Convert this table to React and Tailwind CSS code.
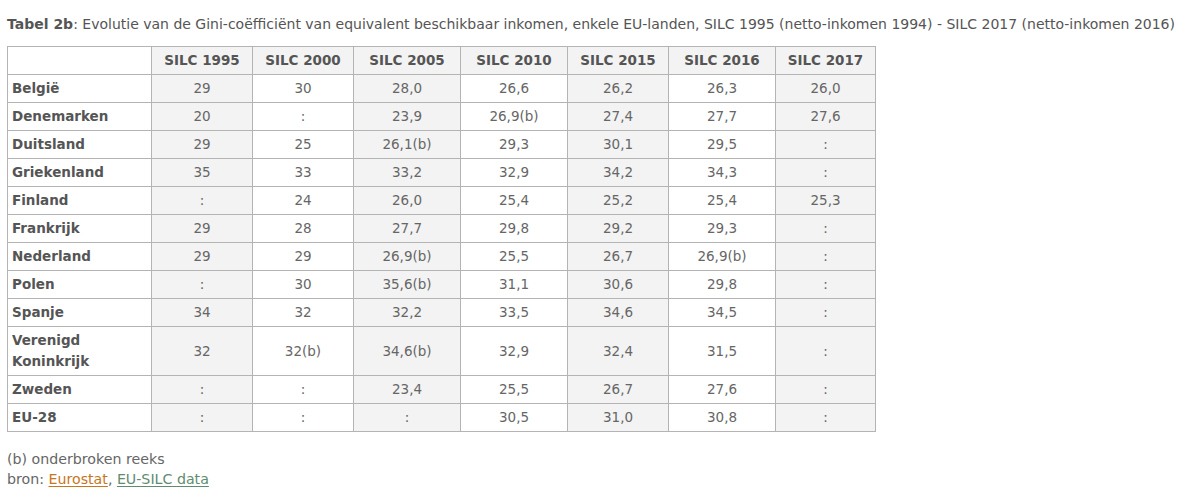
const columns = ['SILC 1995', 'SILC 2000', 'SILC 2005', 'SILC 2010', 'SILC 2015', 'SILC 2016', 'SILC 2017'];

const rows = [
	['België', '29', '30', '28,0', '26,6', '26,2', '26,3', '26,0'],
	['Denemarken', '20', ':', '23,9', '26,9(b)', '27,4', '27,7', '27,6'],
	['Duitsland', '29', '25', '26,1(b)', '29,3', '30,1', '29,5', ':'],
	['Griekenland', '35', '33', '33,2', '32,9', '34,2', '34,3', ':'],
	['Finland', ':', '24', '26,0', '25,4', '25,2', '25,4', '25,3'],
	['Frankrijk', '29', '28', '27,7', '29,8', '29,2', '29,3', ':'],
	['Nederland', '29', '29', '26,9(b)', '25,5', '26,7', '26,9(b)', ':'],
	['Polen', ':', '30', '35,6(b)', '31,1', '30,6', '29,8', ':'],
	['Spanje', '34', '32', '32,2', '33,5', '34,6', '34,5', ':'],
	['Verenigd Koninkrijk', '32', '32(b)', '34,6(b)', '32,9', '32,4', '31,5', ':'],
	['Zweden', ':', ':', '23,4', '25,5', '26,7', '27,6', ':'],
	['EU-28', ':', ':', ':', '30,5', '31,0', '30,8', ':'],
];

const colWidths = ['w-[144px]', 'w-[101px]', 'w-[101px]', 'w-[107px]', 'w-[107px]', 'w-[101px]', 'w-[107px]', 'w-[100px]'];

export default function App() {
	return (
		<div className="min-h-[498px] w-[1200px] bg-white px-[7px] pt-[14px] font-['DejaVu_Sans',Verdana,sans-serif] text-[#555]">
			<p className="text-[14px] leading-[20px] whitespace-nowrap">
				<b className="font-bold">Tabel 2b</b>: Evolutie van de Gini-coëfficiënt van equivalent beschikbaar inkomen, enkele EU-landen, SILC 1995 (netto-inkomen 1994) - SILC 2017 (netto-inkomen 2016)
			</p>

			<table className="mt-[12px] table-fixed border-collapse border border-[#b4b4b4] text-[13.5px] leading-[21px]">
				<colgroup>
					{colWidths.map((w, i) => (
						<col key={i} className={w} />
					))}
				</colgroup>
				<thead>
					<tr>
						<th className="border border-[#b4b4b4] bg-white py-[3px]"></th>
						{columns.map((c) => (
							<th key={c} className="border border-[#b4b4b4] bg-[#f3f3f3] py-[3px] text-center font-bold text-[#555]">
								{c}
							</th>
						))}
					</tr>
				</thead>
				<tbody>
					{rows.map(([name, ...values]) => (
						<tr key={name}>
							<td className="border border-[#b4b4b4] bg-white py-[3px] pl-[4px] pr-[30px] text-left font-bold text-[#555]">
								{name}
							</td>
							{values.map((v, i) => (
								<td
									key={i}
									className={
										i % 2 === 0
											? 'border border-[#b4b4b4] bg-[#f3f3f3] py-[3px] text-center text-[#666]'
											: 'border border-[#b4b4b4] bg-white py-[3px] text-center text-[#666]'
									}
								>
									{v}
								</td>
							))}
						</tr>
					))}
				</tbody>
			</table>

			<div className="mt-[17px] text-[14.2px] leading-[20px] text-[#666]">
				<p>(b) onderbroken reeks</p>
				<p>
					bron: <a className="text-[#c8761e] underline underline-offset-2">Eurostat</a>,{' '}
					<a className="text-[#5f8c70] underline underline-offset-2">EU-SILC data</a>
				</p>
			</div>
		</div>
	);
}
